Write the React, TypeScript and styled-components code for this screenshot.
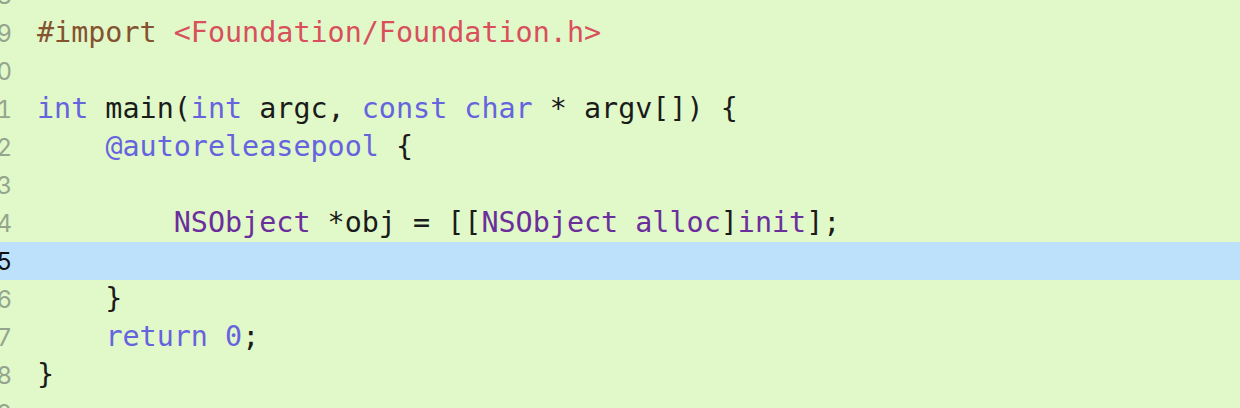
import React from "react";
import styled, { createGlobalStyle } from "styled-components";

const Global = createGlobalStyle`
  html, body { margin: 0; padding: 0; background: #e1f8c9; }
  body { width: 1240px; height: 408px; overflow: hidden; }
`;

const Editor = styled.div`
  width: 1240px;
  height: 408px;
  overflow: hidden;
  background: #e1f8c9;
`;

const Lines = styled.div`
  display: flex;
  flex-direction: column;
  margin-top: -24px;
`;

const Row = styled.div<{ $active?: boolean }>`
  display: flex;
  align-items: center;
  height: 38px;
  background: ${(p) => (p.$active ? "#bee1fb" : "transparent")};
`;

const Gutter = styled.div<{ $active?: boolean }>`
  width: 12px;
  flex: none;
  overflow: hidden;
  display: flex;
  justify-content: flex-end;
  font-family: Inter, "Noto Sans", sans-serif;
  font-size: 24px;
  font-variant-numeric: tabular-nums;
  color: ${(p) => (p.$active ? "#111" : "#95a58d")};
  white-space: nowrap;
`;

const Code = styled.pre`
  margin: 0 0 0 25px;
  font-family: "DejaVu Sans Mono", "Liberation Mono", monospace;
  font-size: 28.4px;
  line-height: 38px;
  color: #1b1b1b;
  white-space: pre;
`;

const colors = {
  pp: "#84532f",
  str: "#d8505c",
  kw: "#6663df",
  cls: "#6b2f9c",
  plain: "#1b1b1b",
};

const Tok = styled.span<{ $k: keyof typeof colors }>`
  color: ${(p) => colors[p.$k]};
`;

type Seg = [keyof typeof colors, string];

const lines: Seg[][] = [
  [],
  [["pp", "#import "], ["str", "<Foundation/Foundation.h>"]],
  [],
  [
    ["kw", "int"],
    ["plain", " main("],
    ["kw", "int"],
    ["plain", " argc, "],
    ["kw", "const"],
    ["plain", " "],
    ["kw", "char"],
    ["plain", " * argv[]) {"],
  ],
  [["plain", "    "], ["kw", "@autoreleasepool"], ["plain", " {"]],
  [],
  [
    ["plain", "        "],
    ["cls", "NSObject"],
    ["plain", " *obj = [["],
    ["cls", "NSObject"],
    ["plain", " "],
    ["cls", "alloc"],
    ["plain", "]"],
    ["cls", "init"],
    ["plain", "];"],
  ],
  [],
  [["plain", "    }"]],
  [["plain", "    "], ["kw", "return"], ["plain", " "], ["kw", "0"], ["plain", ";"]],
  [["plain", "}"]],
  [],
];

export default function App() {
  return (
    <>
      <Global />
      <Editor>
        <Lines>
          {lines.map((segs, i) => {
            const n = 18 + i;
            const active = n === 25;
            return (
              <Row key={i} $active={active}>
                <Gutter $active={active}>{n}</Gutter>
                <Code>
                  {segs.length === 0
                    ? " "
                    : segs.map(([k, t], j) => (
                        <Tok key={j} $k={k}>
                          {t}
                        </Tok>
                      ))}
                </Code>
              </Row>
            );
          })}
        </Lines>
      </Editor>
    </>
  );
}
